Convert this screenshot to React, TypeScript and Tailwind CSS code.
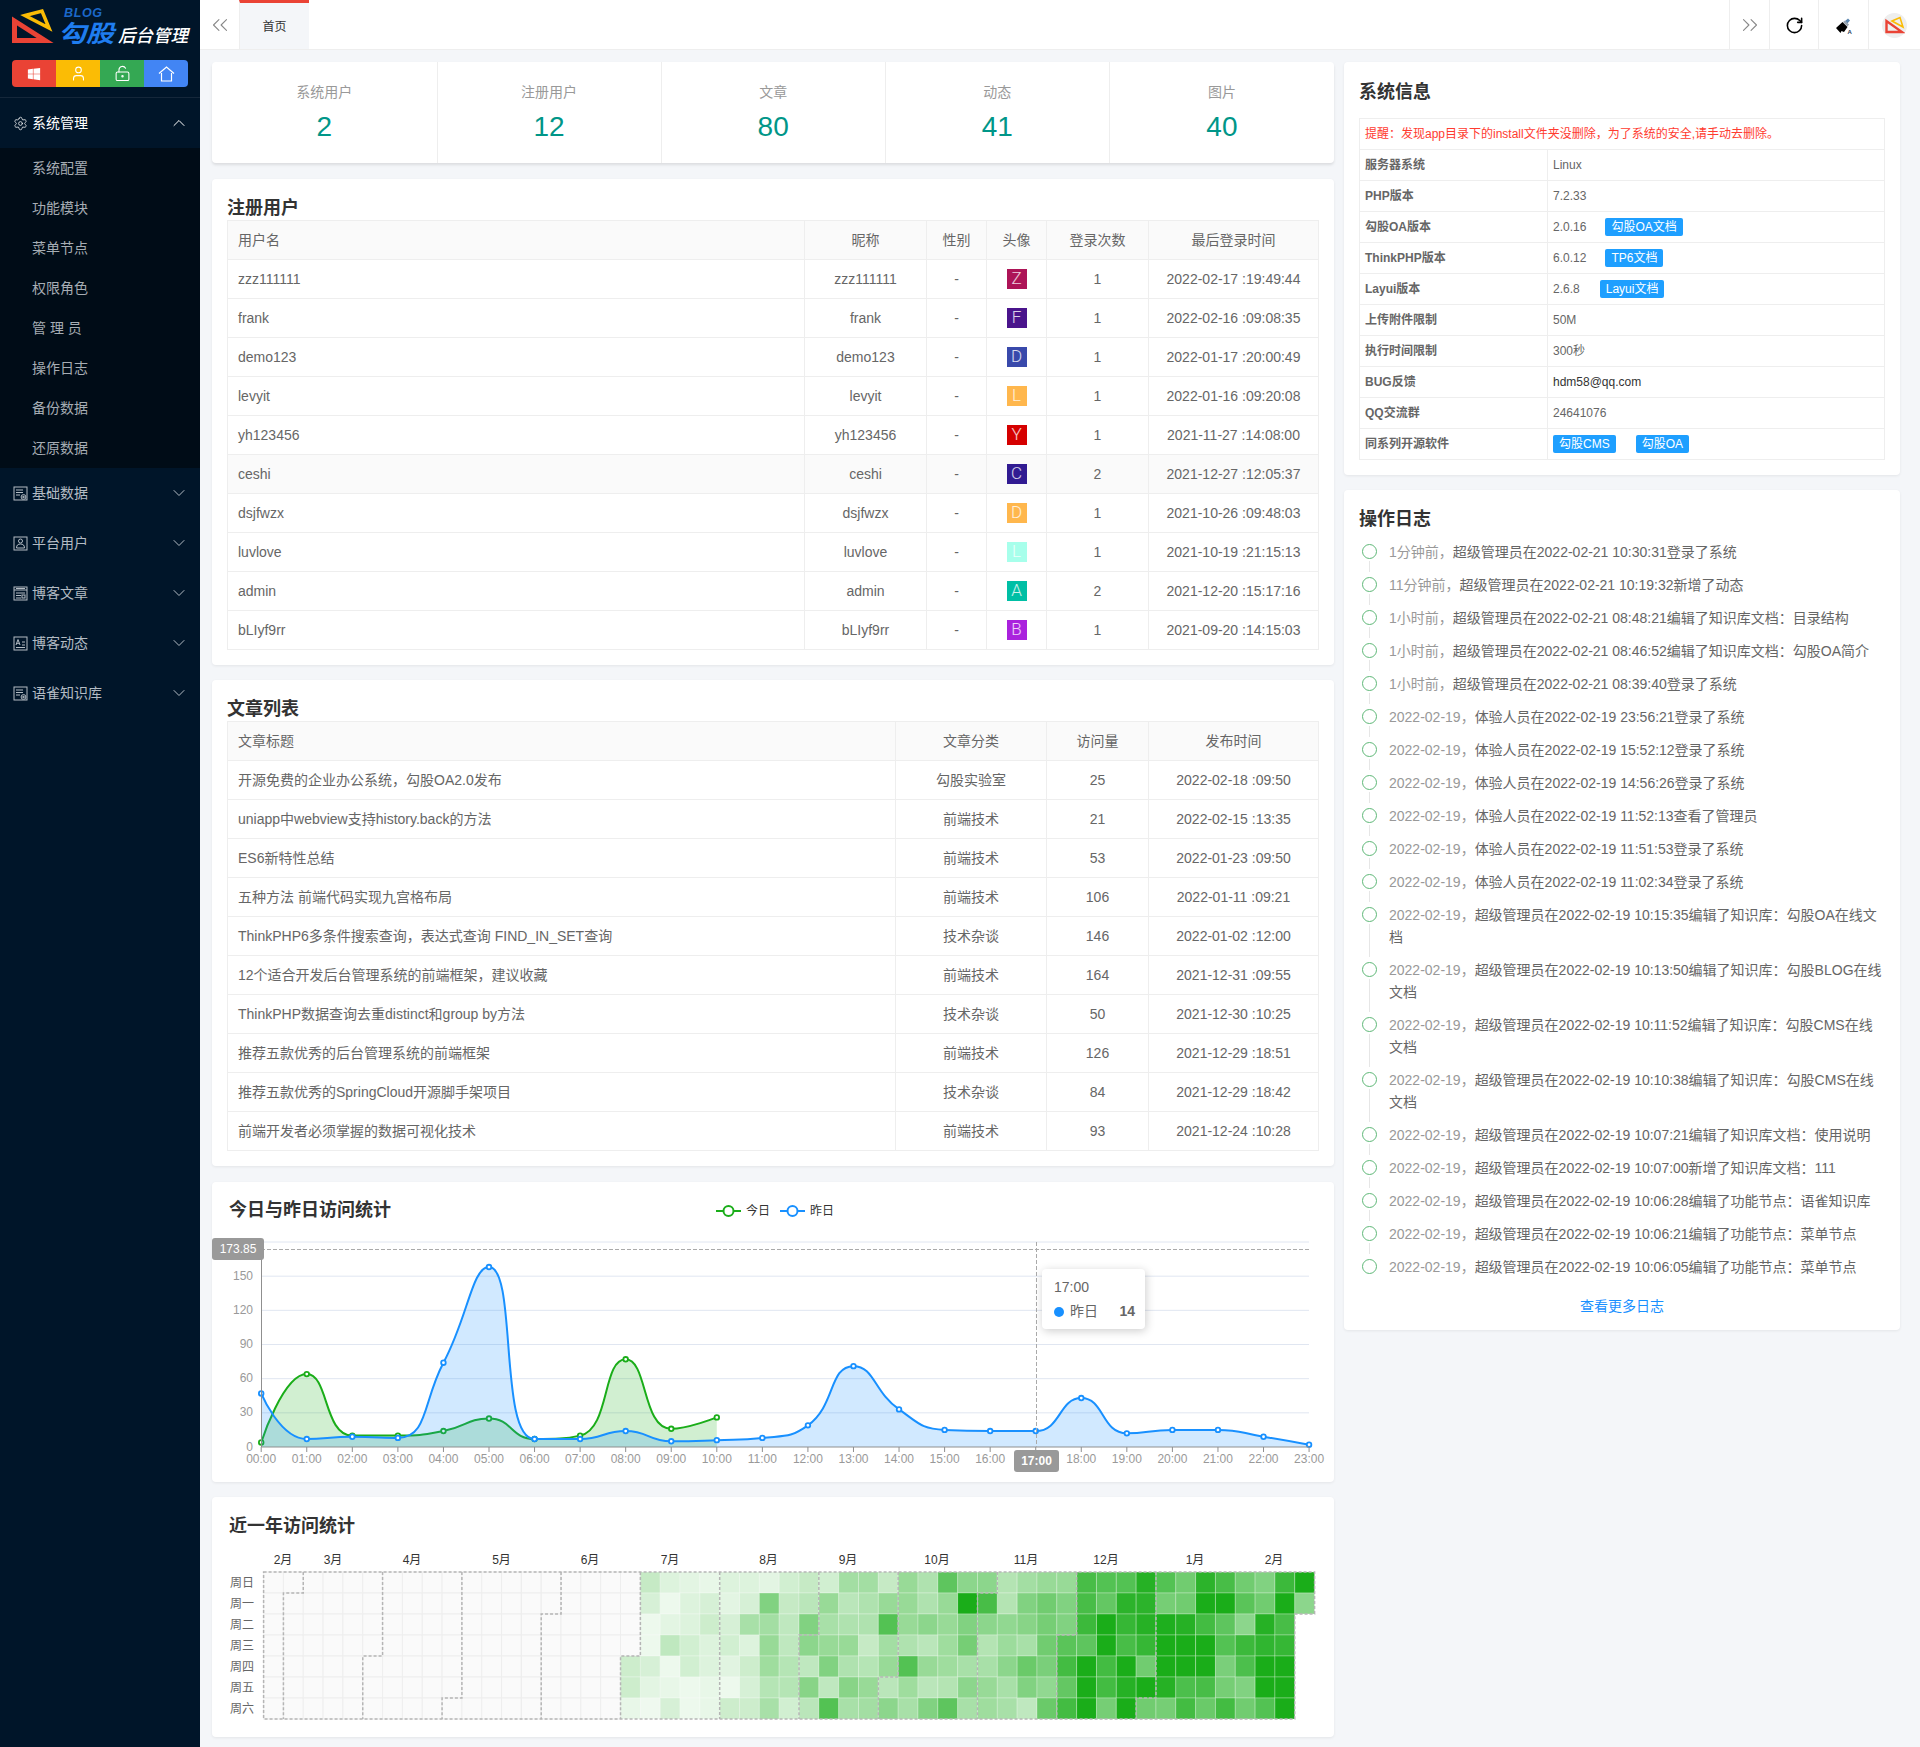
import { ChevronDown, ChevronsLeft, ChevronsRight, ChevronUp, LockKeyholeOpen, RotateCw, Settings, User } from "lucide-react";
import { FaWindows } from "react-icons/fa";

const subMenu = ["系统配置", "功能模块", "菜单节点", "权限角色", "管 理 员", "操作日志", "备份数据", "还原数据"];

const stats = [
  { label: "系统用户", value: 2 },
  { label: "注册用户", value: 12 },
  { label: "文章", value: 80 },
  { label: "动态", value: 41 },
  { label: "图片", value: 40 },
];

const users = [
  ["zzz111111", "Z", "bg-[#ad1457]", "1", "2022-02-17 :19:49:44"],
  ["frank", "F", "bg-[#4a148c]", "1", "2022-02-16 :09:08:35"],
  ["demo123", "D", "bg-[#3949ab]", "1", "2022-01-17 :20:00:49"],
  ["levyit", "L", "bg-[#ffb74d]", "1", "2022-01-16 :09:20:08"],
  ["yh123456", "Y", "bg-[#d50000]", "1", "2021-11-27 :14:08:00"],
  ["ceshi", "C", "bg-[#311b92]", "2", "2021-12-27 :12:05:37"],
  ["dsjfwzx", "D", "bg-[#ffb74d]", "1", "2021-10-26 :09:48:03"],
  ["luvlove", "L", "bg-[#a7ffeb]", "1", "2021-10-19 :21:15:13"],
  ["admin", "A", "bg-[#00bfa5]", "2", "2021-12-20 :15:17:16"],
  ["bLIyf9rr", "B", "bg-[#aa22dd]", "1", "2021-09-20 :14:15:03"],
];

const articles = [
  ["开源免费的企业办公系统，勾股OA2.0发布", "勾股实验室", "25", "2022-02-18 :09:50"],
  ["uniapp中webview支持history.back的方法", "前端技术", "21", "2022-02-15 :13:35"],
  ["ES6新特性总结", "前端技术", "53", "2022-01-23 :09:50"],
  ["五种方法 前端代码实现九宫格布局", "前端技术", "106", "2022-01-11 :09:21"],
  ["ThinkPHP6多条件搜索查询，表达式查询 FIND_IN_SET查询", "技术杂谈", "146", "2022-01-02 :12:00"],
  ["12个适合开发后台管理系统的前端框架，建议收藏", "前端技术", "164", "2021-12-31 :09:55"],
  ["ThinkPHP数据查询去重distinct和group by方法", "技术杂谈", "50", "2021-12-30 :10:25"],
  ["推荐五款优秀的后台管理系统的前端框架", "前端技术", "126", "2021-12-29 :18:51"],
  ["推荐五款优秀的SpringCloud开源脚手架项目", "技术杂谈", "84", "2021-12-29 :18:42"],
  ["前端开发者必须掌握的数据可视化技术", "前端技术", "93", "2021-12-24 :10:28"],
];

const logs = [
  ["1分钟前", "超级管理员在2022-02-21 10:30:31登录了系统"],
  ["11分钟前", "超级管理员在2022-02-21 10:19:32新增了动态"],
  ["1小时前", "超级管理员在2022-02-21 08:48:21编辑了知识库文档：目录结构"],
  ["1小时前", "超级管理员在2022-02-21 08:46:52编辑了知识库文档：勾股OA简介"],
  ["1小时前", "超级管理员在2022-02-21 08:39:40登录了系统"],
  ["2022-02-19", "体验人员在2022-02-19 23:56:21登录了系统"],
  ["2022-02-19", "体验人员在2022-02-19 15:52:12登录了系统"],
  ["2022-02-19", "体验人员在2022-02-19 14:56:26登录了系统"],
  ["2022-02-19", "体验人员在2022-02-19 11:52:13查看了管理员"],
  ["2022-02-19", "体验人员在2022-02-19 11:51:53登录了系统"],
  ["2022-02-19", "体验人员在2022-02-19 11:02:34登录了系统"],
  ["2022-02-19", "超级管理员在2022-02-19 10:15:35编辑了知识库：勾股OA在线文档"],
  ["2022-02-19", "超级管理员在2022-02-19 10:13:50编辑了知识库：勾股BLOG在线文档"],
  ["2022-02-19", "超级管理员在2022-02-19 10:11:52编辑了知识库：勾股CMS在线文档"],
  ["2022-02-19", "超级管理员在2022-02-19 10:10:38编辑了知识库：勾股CMS在线文档"],
  ["2022-02-19", "超级管理员在2022-02-19 10:07:21编辑了知识库文档：使用说明"],
  ["2022-02-19", "超级管理员在2022-02-19 10:07:00新增了知识库文档：111"],
  ["2022-02-19", "超级管理员在2022-02-19 10:06:28编辑了功能节点：语雀知识库"],
  ["2022-02-19", "超级管理员在2022-02-19 10:06:21编辑了功能节点：菜单节点"],
  ["2022-02-19", "超级管理员在2022-02-19 10:06:05编辑了功能节点：菜单节点"],
];

const todayData = [4, 64, 10, 10, 14, 25, 7, 10, 77, 16, 26];
const yesterdayData = [47, 7, 9, 8, 74, 158, 7, 7, 14, 5, 6, 8, 19, 71, 33, 15, 14, 14, 43, 12, 15, 15, 9, 2];

// percent of green per cell, columns 18..52 of the calendar
const heat = [
  [0, 25, 15, 12, 10, 15, 15, 12, 20, 25, 20, 40, 40, 25, 45, 35, 70, 50, 50, 33, 40, 45, 45, 80, 75, 75, 95, 75, 62, 92, 80, 62, 55, 85, 100],
  [0, 18, 8, 15, 18, 12, 18, 55, 25, 30, 45, 30, 35, 45, 45, 35, 45, 100, 80, 33, 55, 62, 55, 80, 68, 92, 92, 60, 62, 100, 100, 72, 62, 100, 50],
  [0, 8, 12, 15, 22, 18, 38, 40, 28, 55, 38, 35, 35, 75, 45, 50, 45, 55, 50, 48, 52, 60, 55, 85, 100, 88, 95, 98, 95, 82, 70, 50, 95, 80],
  [0, 8, 28, 20, 15, 20, 15, 45, 28, 50, 45, 45, 25, 40, 35, 30, 42, 60, 33, 43, 38, 62, 72, 70, 100, 80, 88, 100, 100, 100, 75, 85, 90, 88],
  [22, 18, 8, 20, 15, 13, 22, 42, 32, 28, 55, 35, 32, 45, 75, 45, 42, 38, 38, 50, 65, 58, 82, 100, 82, 100, 62, 100, 100, 100, 58, 78, 100, 100],
  [22, 12, 10, 8, 10, 8, 18, 32, 32, 52, 28, 52, 45, 30, 42, 30, 33, 50, 45, 38, 55, 48, 68, 100, 82, 95, 100, 95, 78, 80, 60, 55, 100, 100],
  [10, 7, 18, 8, 10, 22, 22, 38, 20, 30, 75, 38, 40, 50, 38, 55, 70, 38, 42, 38, 28, 65, 82, 100, 60, 100, 62, 60, 82, 65, 82, 62, 75, 100],
];

const monthLabels: [string, number][] = [
  ["2月", 283], ["3月", 333], ["4月", 412], ["5月", 501.5], ["6月", 590], ["7月", 670], ["8月", 768.5],
  ["9月", 848], ["10月", 937], ["11月", 1026], ["12月", 1106], ["1月", 1195], ["2月", 1274],
];

const weekDays = ["周日", "周一", "周二", "周三", "周四", "周五", "周六"];

function MenuIcon({ kind }: { kind: string }) {
  return (
    <svg width="15" height="15" viewBox="0 0 15 15" fill="none" stroke="#b4bcc4" strokeWidth="1" className="shrink-0">
      <rect x="1" y="1" width="13" height="13" />
      {kind === "data" && (
        <>
          <path d="M3 4h7M3 6.5h7M3 9h4" />
          <circle cx="10.5" cy="11" r="2.4" fill="#001529" />
          <circle cx="10.5" cy="11" r=".8" fill="#b4bcc4" />
        </>
      )}
      {kind === "user" && (
        <>
          <circle cx="7.5" cy="5" r="2" />
          <path d="M3.5 12c0-3 1.7-4 4-4s4 1 4 4z" />
        </>
      )}
      {kind === "article" && (
        <>
          <path d="M1 4h13M3 2.5h9M3 7h9M3 9.5h5M3 12h5" />
          <rect x="9" y="9" width="3" height="3" />
        </>
      )}
      {kind === "dynamic" && (
        <>
          <path d="M3 9l2-5.5L7 9M3.7 7.3h2.6M9 6h3M9 9h3M3 11.5h9" />
        </>
      )}
    </svg>
  );
}

function ParentMenu({ title, kind }: { title: string; kind: string }) {
  return (
    <div className="h-[50px] flex items-center pl-[13px] pr-[11px] text-[14px] text-[#b4bcc4]">
      <MenuIcon kind={kind} />
      <span className="ml-[4px] flex-1">{title}</span>
      <ChevronDown size={20} strokeWidth={1.2} />
    </div>
  );
}

function Sidebar() {
  return (
    <aside className="w-[200px] shrink-0 bg-[#001529]">
      <svg width="200" height="50" viewBox="0 0 200 50" className="block">
        <polygon points="14.5,21 14.5,40.5 45,40.5" fill="none" stroke="#ea4335" strokeWidth="5" />
        <polygon points="25,15.5 42,11 49,28" fill="none" stroke="#fbbc05" strokeWidth="3.5" />
        <text x="64" y="17" fontSize="12.5" fontWeight="700" fontStyle="italic" textLength="38" fill="#1c68c9">BLOG</text>
        <text transform="translate(58 42) scale(1.04 .88)" fontSize="27" fontWeight="700" fontStyle="italic" fill="#1f7df0">勾股</text>
        <text x="118" y="42" fontSize="17.5" fontWeight="500" fontStyle="italic" fill="#ffffff">后台管理</text>
      </svg>
      <div className="mx-[12px] mt-[10px] h-[27px] flex rounded-[4px] overflow-hidden text-white">
        <div className="flex-1 flex items-center justify-center bg-[#ea4335]"><FaWindows size={14} /></div>
        <div className="flex-1 flex items-center justify-center bg-[#fbbc05]"><User size={17} strokeWidth={1.5} /></div>
        <div className="flex-1 flex items-center justify-center bg-[#34a853]"><LockKeyholeOpen size={17} strokeWidth={1.5} /></div>
        <div className="flex-1 flex items-center justify-center bg-[#4285f4]">
          <svg width="17" height="16" viewBox="0 0 17 16" fill="none" stroke="currentColor" strokeWidth="1.2">
            <path d="M1 7.5L8.5 1 16 7.5M3.5 7v8h10V7" />
          </svg>
        </div>
      </div>
      <div className="mt-[10px] border-b border-[#15273a]" />
      <div className="h-[50px] flex items-center pl-[13px] pr-[11px] text-[14px] text-white">
        <Settings size={15} strokeWidth={1.2} className="shrink-0" />
        <span className="ml-[4px] flex-1 pt-[1px]">系统管理</span>
        <ChevronUp size={20} strokeWidth={1.2} />
      </div>
      <div className="bg-[#000c17]">
        {subMenu.map((name) => (
          <div key={name} className="h-[40px] flex items-center pl-[32px] text-[14px] text-[#a6adb4]">{name}</div>
        ))}
      </div>
      <ParentMenu title="基础数据" kind="data" />
      <ParentMenu title="平台用户" kind="user" />
      <ParentMenu title="博客文章" kind="article" />
      <ParentMenu title="博客动态" kind="dynamic" />
      <ParentMenu title="语雀知识库" kind="data" />
    </aside>
  );
}

function TopBar() {
  return (
    <header className="h-[50px] bg-white border-b border-[#eeeeee] flex items-stretch">
      <div className="w-[39px] flex items-center justify-center text-[#888888]"><ChevronsLeft size={26} strokeWidth={1} /></div>
      <div className="w-[70px] bg-[#f4f6f9] border-t-[3px] border-[#ea4335] border-l border-l-[#eeeeee] flex items-center justify-center pt-[2px] text-[12px] text-[#333333]">首页</div>
      <div className="flex-1" />
      <div className="w-[40px] border-l border-[#eeeeee] flex items-center justify-center text-[#888888]"><ChevronsRight size={26} strokeWidth={1} /></div>
      <div className="w-[49px] border-l border-[#eeeeee] flex items-center justify-center text-black pt-[2px]"><RotateCw size={19} strokeWidth={2} /></div>
      <div className="w-[50px] border-l border-[#eeeeee] flex items-center justify-center pt-[2px]">
        <svg width="18" height="18" viewBox="0 0 18 18">
          <path d="M13 1.5l2 2-3 3.5-2.5-2.5z" fill="#5d87b0" />
          <path d="M8 5l2-1.5 4 4-1.500 2z" fill="#9aa5b1" />
          <path d="M1 11l6.500-6 5 5-3.500 5-2.500-1-1 2z" fill="#000000" />
          <text x="12.5" y="17" fontSize="6" fontWeight="700" fill="#1f3a5a">A</text>
        </svg>
      </div>
      <div className="w-[52px] border-l border-[#eeeeee] flex items-center justify-center pt-[1px]">
        <div className="w-[25px] h-[25px] rounded-full bg-[#eeeeee] flex items-center justify-center">
          <svg width="20" height="18" viewBox="0 0 20 18" fill="none">
            <polygon points="1.5,5 1.5,16 17,16" stroke="#ea4335" strokeWidth="2.4" />
            <polygon points="7,5 15,1.5 18,11" stroke="#fbbc05" strokeWidth="1.6" />
          </svg>
        </div>
      </div>
    </header>
  );
}

function Card({ children, className = "" }: { children: React.ReactNode; className?: string }) {
  return <section className={`bg-white rounded-[4px] shadow-[0_1px_3px_rgba(0,0,0,0.07)] ${className}`}>{children}</section>;
}

function CardTitle({ children }: { children: React.ReactNode }) {
  return <h2 className="text-[18px] font-bold leading-[25px] text-[#333333]">{children}</h2>;
}

const th = "h-[39px] border border-[#eeeeee] bg-[#fafafa] font-normal text-[14px] text-[#666666] text-center px-[10px]";
const td = "h-[39px] border border-[#eeeeee] text-[14px] text-[#666666] text-center px-[10px]";

function UsersTable() {
  return (
    <Card className="mt-[16px] h-[486px] px-[15px]">
      <div className="h-[41px] pt-[17px]"><CardTitle>注册用户</CardTitle></div>
      <table className="w-full table-fixed border-collapse">
        <colgroup>
          <col />
          <col className="w-[122px]" />
          <col className="w-[60px]" />
          <col className="w-[60px]" />
          <col className="w-[102px]" />
          <col className="w-[170px]" />
        </colgroup>
        <thead>
          <tr>
            <th className={`${th} text-left`}>用户名</th>
            <th className={th}>昵称</th>
            <th className={th}>性别</th>
            <th className={th}>头像</th>
            <th className={th}>登录次数</th>
            <th className={th}>最后登录时间</th>
          </tr>
        </thead>
        <tbody>
          {users.map(([name, letter, color, times, last]) => (
            <tr key={name} className={name === "ceshi" ? "bg-[#fafafa]" : ""}>
              <td className={`${td} text-left`}>{name}</td>
              <td className={td}>{name}</td>
              <td className={td}>-</td>
              <td className={td}>
                <div className={`mx-auto w-[20px] h-[20px] flex items-center justify-center text-[17px] font-light font-['Roboto'] text-white/80 ${color}`}>{letter}</div>
              </td>
              <td className={td}>{times}</td>
              <td className={td}>{last}</td>
            </tr>
          ))}
        </tbody>
      </table>
    </Card>
  );
}

function ArticlesTable() {
  return (
    <Card className="mt-[15px] h-[486px] px-[15px]">
      <div className="h-[41px] pt-[17px]"><CardTitle>文章列表</CardTitle></div>
      <table className="w-full table-fixed border-collapse">
        <colgroup>
          <col />
          <col className="w-[151px]" />
          <col className="w-[102px]" />
          <col className="w-[170px]" />
        </colgroup>
        <thead>
          <tr>
            <th className={`${th} text-left`}>文章标题</th>
            <th className={th}>文章分类</th>
            <th className={th}>访问量</th>
            <th className={th}>发布时间</th>
          </tr>
        </thead>
        <tbody>
          {articles.map(([title, category, views, date]) => (
            <tr key={title}>
              <td className={`${td} text-left`}>{title}</td>
              <td className={td}>{category}</td>
              <td className={td}>{views}</td>
              <td className={td}>{date}</td>
            </tr>
          ))}
        </tbody>
      </table>
    </Card>
  );
}

type Pt = [number, number];

// same curve as echarts smooth line, keeps peaks from overshooting
function smoothPath(pts: Pt[], s = 0.5) {
  let d = `M${pts[0][0]},${pts[0][1]}`;
  let cx = pts[0][0];
  let cy = pts[0][1];
  for (let i = 1; i < pts.length; i++) {
    const [x, y] = pts[i];
    const [px, py] = pts[i - 1];
    if (i === pts.length - 1) {
      d += `C${cx},${cy},${x},${y},${x},${y}`;
      break;
    }
    const [nx, ny] = pts[i + 1];
    const lenPrev = Math.hypot(x - px, y - py);
    const lenNext = Math.hypot(nx - x, ny - y);
    const ratio = lenNext / (lenNext + lenPrev);
    const clamp = (v: number, a: number, b: number) => Math.max(Math.min(v, Math.max(a, b)), Math.min(a, b));
    let ncx = clamp(x + (nx - px) * s * ratio, nx, x);
    let ncy = clamp(y + (ny - py) * s * ratio, ny, y);
    const c1x = clamp(x - ((ncx - x) * lenPrev) / lenNext, px, x);
    const c1y = clamp(y - ((ncy - y) * lenPrev) / lenNext, py, y);
    ncx = x + ((x - c1x) * lenNext) / lenPrev;
    ncy = y + ((y - c1y) * lenNext) / lenPrev;
    d += `C${cx},${cy},${c1x},${c1y},${x},${y}`;
    cx = ncx;
    cy = ncy;
  }
  return d;
}

const chartX = (i: number) => 261.2 + i * 45.56;
const chartY = (v: number) => 1447 - v * (205 / 180);

function Series({ data, color }: { data: number[]; color: string }) {
  const pts = data.map((v, i): Pt => [chartX(i), chartY(v)]);
  const line = smoothPath(pts);
  const area = `${line}L${chartX(data.length - 1)},1447L${chartX(0)},1447Z`;
  return (
    <g>
      <path d={area} fill={color} fillOpacity="0.2" />
      <path d={line} fill="none" stroke={color} strokeWidth="2" />
      {pts.map(([x, y]) => (
        <circle key={x} cx={x} cy={y} r="2.3" fill="#ffffff" stroke={color} strokeWidth="1.8" />
      ))}
    </g>
  );
}

function LegendItem({ color, label }: { color: string; label: string }) {
  return (
    <div className="flex items-center text-[12px] text-[#333333]">
      <svg width="25" height="14" viewBox="0 0 25 14" className="mr-[5px]">
        <path d="M0 7h25" stroke={color} strokeWidth="2" />
        <circle cx="12.5" cy="7" r="5" fill="#ffffff" stroke={color} strokeWidth="2" />
      </svg>
      {label}
    </div>
  );
}

function VisitChart() {
  return (
    <Card className="mt-[16px] h-[300px] relative">
      <div className="h-[56px] pl-[17px] pt-[16px] flex items-start">
        <CardTitle>今日与昨日访问统计</CardTitle>
        <div className="ml-[325px] mt-[4px] flex gap-[10px]">
          <LegendItem color="#1aad19" label="今日" />
          <LegendItem color="#1890ff" label="昨日" />
        </div>
      </div>
      <svg width="1122" height="244" viewBox="212 1238 1122 244" className="block">
        {[0, 30, 60, 90, 120, 150, 180].map((v) => (
          <g key={v}>
            {v > 0 && <path d={`M261 ${chartY(v)}H1309`} stroke="#e0e6f1" />}
            <text x="253" y={chartY(v) + 3.5} textAnchor="end" fontSize="12" fill="#999999">{v}</text>
          </g>
        ))}
        <Series data={todayData} color="#1aad19" />
        <Series data={yesterdayData} color="#1890ff" />
        <path d="M261.5 1242V1447H1309" fill="none" stroke="#8f8f8f" />
        {yesterdayData.map((_, i) => (
          <g key={i}>
            <path d={`M${chartX(i)} 1447v5`} stroke="#8f8f8f" />
            <text x={chartX(i)} y="1463" textAnchor="middle" fontSize="12" fill="#999999">{`${String(i).padStart(2, "0")}:00`}</text>
          </g>
        ))}
        <path d="M261 1249.5H1309" stroke="#aaaaaa" strokeDasharray="4 2" />
        <path d="M1036.5 1242V1447" stroke="#aaaaaa" strokeDasharray="4 2" />
        <rect x="212" y="1238" width="52" height="22" rx="3" fill="#999999" />
        <text x="238" y="1253" textAnchor="middle" fontSize="12" fill="#ffffff">173.85</text>
        <rect x="1014" y="1450" width="45" height="22" rx="3" fill="#999999" />
        <text x="1036.5" y="1465" textAnchor="middle" fontSize="12" fontWeight="700" fill="#ffffff">17:00</text>
      </svg>
      <div className="absolute left-[830px] top-[87px] w-[103px] h-[60px] bg-white rounded-[4px] shadow-[1px_2px_10px_rgba(0,0,0,0.2)] pl-[12px] pr-[10px] pt-[8px] text-[14px] leading-[21px] text-[#666666]">
        <div>17:00</div>
        <div className="mt-[3px] flex items-center">
          <span className="w-[10px] h-[10px] rounded-full bg-[#1890ff] mr-[6px]" />
          <span>昨日</span>
          <span className="ml-auto font-bold">14</span>
        </div>
      </div>
    </Card>
  );
}

const cellW = 19.83;
const cellH = 21;
const gridX = 263.6;
const gridY = 1572;

function monthSplitters() {
  const start = Date.UTC(2021, 1, 21);
  const out: string[] = [];
  for (let m = 2; m < 13; m++) {
    const idx = Math.round((Date.UTC(2021, m, 1) - start) / 86400000);
    const c = Math.floor(idx / 7);
    const r = idx % 7;
    const x0 = gridX + c * cellW;
    const x1 = x0 + cellW;
    const y = gridY + r * cellH;
    const bottom = gridY + 7 * cellH;
    if (r === 0) out.push(`M${x0} ${gridY}V${bottom}`);
    else out.push(`M${x1} ${gridY}V${y}H${x0}V${bottom}`);
  }
  return out;
}

function HeatMap() {
  const cells = [];
  for (let c = 0; c < 53; c++) {
    for (let r = 0; r < 7; r++) {
      if (c * 7 + r > 365) continue;
      const v = c >= 18 ? heat[r][c - 18] : 0;
      cells.push(
        <rect
          key={`${c}-${r}`}
          x={gridX + c * cellW}
          y={gridY + r * cellH}
          width={cellW}
          height={cellH}
          fill={v ? `rgba(26,173,25,${v / 100})` : "#fafafa"}
          stroke={v ? "rgba(255,255,255,0.28)" : "#eeeeee"}
        />,
      );
    }
  }
  const right = gridX + 53 * cellW;
  const bottom = gridY + 7 * cellH;
  return (
    <Card className="mt-[15px] h-[240px]">
      <div className="h-[56px] pl-[17px] pt-[17px]">
        <CardTitle>近一年访问统计</CardTitle>
      </div>
      <svg width="1122" height="184" viewBox="212 1553 1122 184" className="block">
        {monthLabels.map(([label, x]) => (
          <text key={x} x={x} y="1564" textAnchor="middle" fontSize="12" fill="#333333">{label}</text>
        ))}
        {weekDays.map((label, r) => (
          <text key={label} x="254" y={gridY + r * cellH + 15} textAnchor="end" fontSize="12" fill="#666666">{label}</text>
        ))}
        {cells}
        <path
          d={`M${gridX} ${gridY}H${right}V${gridY + 2 * cellH}H${right - cellW}V${bottom}H${gridX}Z`}
          fill="none"
          stroke="#b5b5b5"
          strokeWidth="1.5"
          strokeDasharray="3 2"
        />
        {monthSplitters().map((d) => (
          <path key={d} d={d} fill="none" stroke="#b5b5b5" strokeWidth="1.5" strokeDasharray="3 2" />
        ))}
      </svg>
    </Card>
  );
}

function Badge({ children, className = "" }: { children: React.ReactNode; className?: string }) {
  return <span className={`inline-block h-[18px] leading-[18px] px-[6px] rounded-[2px] bg-[#1e9fff] text-white text-[12px] ${className}`}>{children}</span>;
}

function SystemInfo() {
  const rows: [string, React.ReactNode][] = [
    ["服务器系统", "Linux"],
    ["PHP版本", "7.2.33"],
    ["勾股OA版本", <>2.0.16<Badge className="ml-[19px]">勾股OA文档</Badge></>],
    ["ThinkPHP版本", <>6.0.12<Badge className="ml-[19px]">TP6文档</Badge></>],
    ["Layui版本", <>2.6.8<Badge className="ml-[20px]">Layui文档</Badge></>],
    ["上传附件限制", "50M"],
    ["执行时间限制", "300秒"],
    ["BUG反馈", <span className="text-[#333333]">hdm58@qq.com</span>],
    ["QQ交流群", "24641076"],
    ["同系列开源软件", <><Badge>勾股CMS</Badge><Badge className="ml-[20px]">勾股OA</Badge></>],
  ];
  return (
    <Card className="h-[413px] px-[15px]">
      <div className="h-[56px] pt-[18px]"><CardTitle>系统信息</CardTitle></div>
      <table className="w-full table-fixed border-collapse text-[12px] text-[#666666]">
        <colgroup>
          <col className="w-[188px]" />
          <col />
        </colgroup>
        <tbody>
          <tr>
            <td colSpan={2} className="h-[31px] border border-[#eeeeee] px-[5px] text-[#ff3b30]">提醒：发现app目录下的install文件夹没删除，为了系统的安全,请手动去删除。</td>
          </tr>
          {rows.map(([label, value]) => (
            <tr key={label}>
              <td className="h-[31px] border border-[#eeeeee] px-[5px] font-bold">{label}</td>
              <td className="h-[31px] border border-[#eeeeee] px-[5px]">{value}</td>
            </tr>
          ))}
        </tbody>
      </table>
    </Card>
  );
}

function LogList() {
  return (
    <Card className="h-[840px] px-[15px]">
      <div className="h-[51px] pt-[17px]"><CardTitle>操作日志</CardTitle></div>
      <ul>
        {logs.map(([time, text], i) => (
          <li key={i} className="flex">
            <div className="w-[30px] shrink-0 flex flex-col items-center pl-[2.5px] pr-[12.5px]">
              <span className="mt-[3px] w-[15px] h-[15px] shrink-0 rounded-full border border-[#5fb878]" />
              {i < logs.length - 1 && <span className="w-px flex-1 bg-[#e6e6e6] my-[2px]" />}
            </div>
            <p className="flex-1 pb-[11px] text-[14px] leading-[22px] text-[#666666]">
              <span className="text-[#999999]">{time}，</span>{text}
            </p>
          </li>
        ))}
      </ul>
      <div className="mt-[6px] text-center text-[14px] leading-[22px] text-[#1890ff]">查看更多日志</div>
    </Card>
  );
}

export default function App() {
  return (
    <div className="flex w-full min-h-[1747px] bg-[#f4f6f9] font-['Liberation_Sans','Noto_Sans_CJK_SC',sans-serif]">
      <Sidebar />
      <main className="flex-1 min-w-0">
        <TopBar />
        <div className="flex gap-[10px] pt-[12px] pl-[12px] pr-[20px] pb-[10px]">
          <div className="w-[1122px] shrink-0 flex flex-col">
            <Card className="h-[101px] grid grid-cols-[225.5px_1fr_1fr_1fr_1fr] shadow-[0_2px_3px_rgba(0,0,0,0.1)]">
              {stats.map((s, i) => (
                <div key={s.label} className={`flex flex-col items-center pt-[20px] ${i < 4 ? "border-r border-[#eeeeee]" : ""}`}>
                  <span className="text-[14px] leading-[20px] text-[#999999]">{s.label}</span>
                  <span className="mt-[5px] text-[28px] leading-[40px] text-[#009688]">{s.value}</span>
                </div>
              ))}
            </Card>
            <UsersTable />
            <ArticlesTable />
            <VisitChart />
            <HeatMap />
          </div>
          <div className="flex-1 flex flex-col gap-[15px] items-stretch">
            <SystemInfo />
            <LogList />
          </div>
        </div>
      </main>
    </div>
  );
}
